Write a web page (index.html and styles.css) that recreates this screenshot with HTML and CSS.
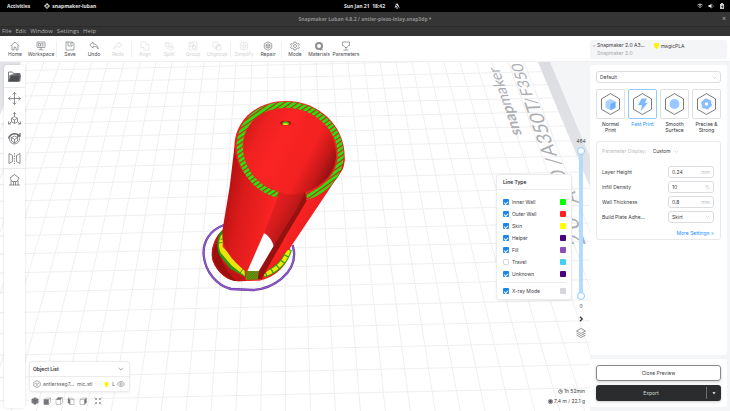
FILE: index.html
```html
<!DOCTYPE html>
<html lang="en">
<head>
<meta charset="utf-8">
<title>Snapmaker Luban</title>
<link rel="stylesheet" href="styles.css">
</head>
<body>
<svg class="defs" aria-hidden="true">
  <symbol id="chev" viewBox="0 0 10 10"><path d="M1 3l4 4 4-4" fill="none" stroke="currentColor"/></symbol>
  <symbol id="shield" viewBox="0 0 10 12"><path d="M0 0h10v6l-2 4-3 2-3-2-2-4z" fill="#fbf40a"/></symbol>
  <symbol id="hex" viewBox="0 0 30 30"><path d="M15 3.500l10 5.800v11.600l-10 5.800-10-5.800V9.300z" fill="#fff" stroke="#6b6d70"/></symbol>
</svg>

<header class="desktop-bar">
  <div class="desktop-side"><span>Activities</span>
    <span class="app"><svg viewBox="0 0 12 12"><path d="M6 0l6 6-6 6-6-6z" fill="#ddd"/><path d="M3.500 4l5 1.500-5 1.500 5 1.500" fill="none" stroke="#111" stroke-width="1.500"/></svg>snapmaker-luban</span></div>
  <div class="clock"><span>Sun Jan 21&nbsp; 18:42</span><svg viewBox="0 0 12 12"><path d="M6 1c3 0 3 3 3.300 5l1.700 3H1l1.700-3C3 4 3 1 6 1zM5 10h2v2H5z" fill="#ccc"/><path d="M1 1l10 10" stroke="#000" stroke-width="2"/><path d="M2 1l10 10" stroke="#ccc"/></svg></div>
  <div class="desktop-side status">
    <svg viewBox="0 0 12 12"><path d="M1 4.500c3-3 7-3 10 0M3 7c2-2 4-2 6 0M6 10V8" fill="none" stroke="#ddd" stroke-width="2"/></svg>
    <svg viewBox="0 0 12 12"><path d="M1 4h3l3-3v10L4 8H1z" fill="#eee"/><path d="M9 3c2 2 2 4 0 6" fill="none" stroke="#999" stroke-width="1.500"/></svg>
    <svg viewBox="0 0 12 12"><path d="M2 2h2V0h4v2h2v10H2z" fill="#ccc"/><path d="M7 4L4 8h2v3l3-4H7z" fill="#222"/></svg>
  </div>
</header>
<div class="title-bar"><span>Snapmaker Luban 4.8.2 / antler-piezo-inlay.snap3dp *</span><button class="close" aria-label="Close window">×</button></div>
<nav class="menu-bar"><button>File</button><button>Edit</button><button>Window</button><button>Settings</button><button>Help</button></nav>

<div class="toolbar">
  <button class="tool"><svg viewBox="0 0 20 20"><path d="M1.500 10L10 2l8.500 8M4 8.500V18h4v-5.500h4V18h4V8.500"/></svg>Home</button>
  <button class="tool wide"><svg viewBox="0 0 20 20"><rect x="2" y="2" width="16" height="11" rx="1"/><path d="M5 5h4v5H5zM11 5h4M11 7.500h4M11 10h4M10 13v4M5 17.500h10" /></svg>Workspace</button>
  <i class="sep"></i>
  <button class="tool"><svg viewBox="0 0 20 20"><path d="M2 2h13l3 3v13H2zM6 2v8h8V2M11 4v3"/></svg>Save</button>
  <button class="tool"><svg viewBox="0 0 20 20"><path d="M8 2L1.500 8 8 14v-3.500c5 0 8 1.500 10.500 5.500C18 10 14 6 8 5.500z"/></svg>Undo</button>
  <button class="tool" disabled><svg viewBox="0 0 20 20"><path d="M12 2l6.500 6L12 14v-3.500c-5 0-8 1.500-10.500 5.500C2 10 6 6 12 5.500z"/></svg>Redo</button>
  <i class="sep"></i>
  <button class="tool" disabled><svg viewBox="0 0 20 20"><path d="M2 2h10v5h6v11H8v-5H2z"/></svg>Align</button>
  <button class="tool" disabled><svg viewBox="0 0 20 20"><path d="M6 2l4 2v5l-4 2-4-2V4zM14 9l4 2v5l-4 2-4-2v-5zM2 4l4 2 4-2M10 11l4 2 4-2M13 4l3 3M4 13l3 3"/></svg>Split</button>
  <button class="tool" disabled><svg viewBox="0 0 20 20"><path d="M2 2h16v16H2zM5 5h6v6H5zM9 9h6v6H9z"/></svg>Group</button>
  <button class="tool" disabled><svg viewBox="0 0 20 20"><path d="M2 2h10v10H2zM9 9h9v9H9zM12 7h4v2M7 12v4h2"/></svg>Ungroup</button>
  <i class="sep"></i>
  <button class="tool" disabled><svg viewBox="0 0 20 20"><circle cx="10" cy="10" r="8"/><path d="M10 2v16M10 6L4 10l6 5M13 6v8M16 8v5"/></svg>Simplify</button>
  <button class="tool"><svg viewBox="0 0 20 20"><path d="M10 1.500l7.500 4.200v8.600L10 18.500l-7.500-4.200V5.700z"/><path d="M10 5.500l4 2.300v4.500L10 14.500l-4-2.200V7.800zM6 8l4 2 4-2M10 10v4"/></svg>Repair</button>
  <i class="sep"></i>
  <button class="tool"><svg viewBox="0 0 20 20"><path d="M8 2h4l.5 2.500 2.500 1.200 2.300-.9 1.500 3-1.800 1.700v1l1.800 1.700-1.500 3-2.300-.9-2.500 1.200L12 18H8l-.5-2.500L5 14.300l-2.300.9-1.500-3L3 10.500v-1L1.200 7.800l1.500-3L5 5.700l2.500-1.200z"/><circle cx="10" cy="10" r="3"/></svg>Mode</button>
  <button class="tool"><svg viewBox="0 0 20 20"><circle cx="10" cy="10" r="6" stroke="#8d8f93" stroke-width="4"/><path d="M12 17.500h6"/></svg>Materials</button>
  <button class="tool params"><svg viewBox="0 0 20 20"><path d="M3 2h14v7h-2l-3 4H8L5 9H3zM10 13v4M5 18h10"/></svg>Parameters</button>
  <div class="machine">
    <div class="machine-name"><b class="dot"></b><span>Snapmaker 2.0 A3...</span><small>Snapmaker 2.0</small></div>
    <div class="material"><svg viewBox="0 0 10 12"><use href="#shield"/></svg>magicPLA</div>
  </div>
</div>

<main class="work">
  <section class="stage" aria-label="3D preview">
    <svg class="scene" viewBox="0 62 590 349" preserveAspectRatio="xMinYMin slice">
      <defs>
        <linearGradient id="body" gradientUnits="userSpaceOnUse" x1="104" y1="300" x2="250" y2="330"><stop offset="0" stop-color="#b31112"/><stop offset=".4" stop-color="#dc1b1b"/><stop offset="1" stop-color="#f82322"/></linearGradient>
        <linearGradient id="inner" gradientUnits="userSpaceOnUse" x1="160" y1="130" x2="425" y2="270"><stop offset="0" stop-color="#d01b1b"/><stop offset=".15" stop-color="#ef2121"/><stop offset=".35" stop-color="#fa2424"/><stop offset=".68" stop-color="#f32121"/><stop offset=".85" stop-color="#c41818"/><stop offset="1" stop-color="#7d0e0e"/></linearGradient>
        <linearGradient id="chute" gradientUnits="userSpaceOnUse" x1="240" y1="330" x2="320" y2="375"><stop offset="0" stop-color="#ea2020"/><stop offset=".5" stop-color="#d61c1c"/><stop offset="1" stop-color="#b01616"/></linearGradient>
        <linearGradient id="flank" gradientUnits="userSpaceOnUse" x1="300" y1="400" x2="370" y2="440"><stop offset="0" stop-color="#fc2323"/><stop offset=".6" stop-color="#ee1f1f"/><stop offset="1" stop-color="#d51919"/></linearGradient>
        <pattern id="hatch" width="12" height="12" patternUnits="userSpaceOnUse" patternTransform="rotate(55)"><path d="M0 0h12v12H0z" fill="#19ea12"/><path d="M0 0h4v12H0z" fill="#b92c10"/><path d="M4 0h1v12H4z" fill="#d9a80c"/></pattern>
        <pattern id="fine" width="5" height="5" patternUnits="userSpaceOnUse" patternTransform="rotate(45)"><path d="M0 0h5v5H0z" fill="#2db50c"/><path d="M0 0h2v5H0z" fill="#b4480c"/></pattern>
        <linearGradient id="band" x1="0" y1="0" x2="0" y2="1"><stop offset="0" stop-color="#dcdde0"/><stop offset="1" stop-color="#e4e5e8"/></linearGradient>
      </defs>
      <path d="M0 62h590v349H0z" fill="#fff"/>
      <g id="plate-grid" stroke="#efeff1"></g>
      <path d="M0 62h21L0 115z" fill="#e3e4e7"/>
      <path d="M538 62h52v125z" fill="#f4f5f7"/>
      <path d="M538 62h12l40 95v30z" fill="url(#band)"/>
      <g class="plate-text">
        <text class="brand" transform="translate(522 135) rotate(-109) skewX(-17)"><tspan class="strong">snap</tspan>maker</text>
        <text transform="translate(533 96) rotate(-109) skewX(-17)">F350</text>
        <text transform="translate(538 104) rotate(-109) skewX(-17)">/</text>
        <text class="mid" transform="translate(557 156) rotate(-109) skewX(-17)">A350T</text>
        <text class="mid" transform="translate(567 180) rotate(-109) skewX(-17)">0 /</text>
        <text class="mid" transform="translate(579 203) rotate(-109) skewX(-17)">A</text>
        <text class="near" transform="translate(586 245) rotate(-109) skewX(-17)">2.0</text>
      </g>
      <g transform="translate(190 90) scale(.33333)">
        <path d="M102 405C60 420 38 455 41 495c4 50 40 92 82 102l65 3c60-3 130-50 124-115l-4-20" fill="none" stroke="#5f3a94" stroke-width="7"/>
        <path d="M102 405C60 420 38 455 41 495c4 50 40 92 82 102l65 3c60-3 130-50 124-115l-4-20" fill="none" stroke="#9259cf" stroke-width="4"/>
        <path d="M98 420C70 445 60 485 68 512c14 38 46 62 80 62l60-2c48-10 94-50 92-100l-60-70z" fill="#f02020"/>
        <path d="M98 420C70 445 60 485 68 512c14 38 46 62 80 62l20-2-6-12C120 540 80 510 84 460z" fill="#c01515"/>
        <path d="M84 455C62 480 62 510 84 536c14 18 34 32 56 38-34-34-52-64-56-119z" fill="#9d0f0f"/>
        <path d="M98 418C80 438 78 470 88 495l34 42 44 24v-18L98 480z" fill="#1f9c0c"/>
        <path d="M98 430C84 450 84 470 92 488l32 38 40 32v-16L98 470z" fill="#eee408"/>
        <path d="M84 460l12-3M92 448l8-2M150 550l8-12" stroke="#26920b" stroke-width="3"/>
        <path d="M297 478c-8 32-34 62-76 76" fill="none" stroke="#24a80c" stroke-width="18"/>
        <path d="M296 480c-8 31-34 60-74 74" fill="none" stroke="#f1e90a" stroke-width="12" stroke-dasharray="17 4"/>
        <path d="M464 200c0 20-2 34-10 44L300 474l-80 82-6 4 48-78 88-155z" fill="url(#flank)"/>
        <path d="M464 200c0-93-77-167-176-167C205 33 137 85 133 165c1 75 61 131 131 153l85 10c64-24 115-70 115-128z" fill="#ef2020"/>
        <path d="M263 303c-60-16-101-74-101-138 0-66 56-112 124-112 84 0 152 62 152 142 0 50-34 90-92 112l-2 26-92 137-30-40z" fill="url(#inner)"/>
        <path d="M263 303q30 20 83 3l-2 28-92 134-30-38z" fill="url(#chute)"/>
        <path d="M134 165L119 290 100 405c-10 50 6 90 65 138l8-2 49-111 43-112C194 296 136 240 134 165z" fill="url(#body)"/>
        <path d="M222 430c12 5 24 20 29 38l-37 76h-42z" fill="#fff"/>
        <path d="M345 308l5 24L262 482l-48 86-12-2 5-24 44-74 70-112z" fill="#97110f"/>
        <path d="M170 543h36l-3 26h-36z" fill="url(#fine)"/>
        <path d="M263 314C195 296 149 236 149 165 152 90 215 44 287 44c90 0 165 70 165 153 0 56-46 106-101 123" fill="none" stroke="url(#hatch)" stroke-width="18"/>
        <ellipse cx="287" cy="99" rx="17" ry="7" fill="#a81616"/>
        <path d="M276 102c4-11 18-11 22 0l-3 3h-16z" fill="#3dbb10"/><path d="M280 100h13v5h-13z" fill="#f3dc0a"/>
      </g>
    </svg>

    <div class="rail">
      <button aria-label="Open"><svg viewBox="0 0 26 24"><path d="M1 3h8l2 3h13v15H1z" fill="#fff" stroke="#55575b" stroke-width="1.500"/><path d="M5 10h20l-3 12H1z" fill="#4c4e52"/><path d="M2 12l4-3 17-3v4H4z" fill="#4c4e52"/></svg></button>
      <hr>
      <button aria-label="Move"><svg viewBox="0 0 26 26"><path d="M13 1v24M1 13h24M9.500 5L13 1l3.500 4M9.500 21l3.500 4 3.500-4M5 9.500L1 13l4 3.500M21 9.500l4 3.500-4 3.500"/></svg></button>
      <button aria-label="Scale"><svg viewBox="0 0 26 26"><path d="M13 9l6 3.500v7L13 23l-6-3.500v-7zM7 12.500l6 3.500 6-3.500M13 16v7M13 9V1M10 4.500L13 1l3 3.500M7 20l-6 4M1 19v5h5M19 20l6 4M25 19v5h-5"/></svg></button>
      <button aria-label="Rotate"><svg viewBox="0 0 26 26"><circle cx="13" cy="14" r="10"/><path d="M13 8l6 3v7l-6 4-6-4v-7zM7 11l6 4 6-4M13 15v7"/><path d="M1 13C3 3 15 0 23 7M24 2v6h-6" stroke-width="2.500"/></svg></button>
      <button aria-label="Mirror"><svg viewBox="0 0 26 26"><path d="M2 3l7 4v12l-7 4zM24 3l-7 4v12l7 4z"/><path d="M13 2v22" stroke-dasharray="3 2"/></svg></button>
      <hr>
      <button aria-label="Supports"><svg viewBox="0 0 26 26"><path d="M13 3l9 7-4 7H8l-4-7zM2 24h22M6 15v9M20 15v9M11 18v6M15 18v6"/></svg></button>
    </div>

    <div class="left-dock">
      <section class="objects">
        <h2>Object List<svg viewBox="0 0 10 10"><use href="#chev"/></svg></h2>
        <div class="object"><svg class="cube" viewBox="0 0 20 20"><path d="M10 1.500l8 4.500v8.500l-8 4.500-8-4.500V6zM5 7.500l5 3 5-3M10 10.500V16"/></svg><span>antlersseg7...&nbsp; mic.stl</span><svg class="tag" viewBox="0 0 10 12"><use href="#shield"/></svg><b>L</b><svg class="eye" viewBox="0 0 20 14"><path d="M1 7c4-8 14-8 18 0-4 8-14 8-18 0z"/><circle cx="10" cy="7" r="3"/></svg></div>
      </section>
      <div class="views">
        <button aria-label="Isometric view"><svg viewBox="0 0 16 16"><path d="M8 1l6.500 3.500v7L8 15l-6.500-3.500v-7z" fill="#7a7c80"/><path d="M2 4.500L8 8l6-3.500M8 8v7" stroke="#55575b"/></svg></button>
        <button aria-label="Front view"><svg viewBox="0 0 16 16"><path d="M2 5h9v10H2zM2 5l4-3h9l-4 3M15 2v9l-4 4" /><path d="M2 5h9v10H2z" fill="#74767a"/></svg></button>
        <button aria-label="Top view"><svg viewBox="0 0 16 16"><path d="M2 5h9v10H2zM15 2v9l-4 4" /><path d="M2 5l4-4h9l-4 4z" fill="#74767a"/></svg></button>
        <button aria-label="Left view"><svg viewBox="0 0 16 16"><path d="M6 5h8v10H6zM2 2h8l4 3"/><path d="M2 2l4 3v10l-4-4z" fill="#74767a"/></svg></button>
        <button aria-label="Right view"><svg viewBox="0 0 16 16"><path d="M2 5h9v10H2zM2 5l4-3h9"/><path d="M11 5l4-3v9l-4 4z" fill="#74767a"/></svg></button>
        <button class="fit" aria-label="Fit view"><svg viewBox="0 0 16 16"><path d="M1 1l4 4M5 2v3H2M15 1l-4 4M11 2v3h3M1 15l4-4M5 14v-3H2M15 15l-4-4M11 14v-3h3" stroke-width="1.500"/></svg></button>
      </div>
    </div>

    <div class="right-dock">
      <div class="layers">
        <section class="line-type">
          <h2>Line Type</h2>
          <div class="types">
            <label><input type="checkbox" checked><span>Inner Wall</span><i class="c-inner"></i></label>
            <label><input type="checkbox" checked><span>Outer Wall</span><i class="c-outer"></i></label>
            <label><input type="checkbox" checked><span>Skin</span><i class="c-skin"></i></label>
            <label><input type="checkbox" checked><span>Helper</span><i class="c-helper"></i></label>
            <label><input type="checkbox" checked><span>Fill</span><i class="c-fill"></i></label>
            <label><input type="checkbox"><span>Travel</span><i class="c-travel"></i></label>
            <label><input type="checkbox" checked><span>Unknown</span><i class="c-helper"></i></label>
            <hr>
            <label><input type="checkbox" checked><span>X-ray Mode</span><i class="c-xray"></i></label>
          </div>
        </section>
        <div class="layer-range">
          <output>464</output>
          <div class="slider">
            <input type="range" min="0" max="464" value="464" aria-label="Top layer">
            <input type="range" min="0" max="464" value="0" aria-label="Bottom layer">
          </div>
          <output>0</output>
          <button aria-label="Collapse line types"><svg viewBox="0 0 12 12"><path d="M4 1.500L8.500 6 4 10.500" stroke="#333" stroke-width="2.500"/></svg></button>
          <button class="stack" aria-label="Layers"><svg viewBox="0 0 20 20"><path d="M10 1l9 5-9 5-9-5zM1 10l9 5 9-5M1 14l9 5 9-5"/></svg></button>
        </div>
      </div>
      <div class="stats">
        <span><svg viewBox="0 0 12 12"><circle cx="6" cy="6" r="4.500"/><path d="M6 3v3h3"/></svg>1h 52min</span>
        <span><svg viewBox="0 0 12 12"><circle cx="6" cy="6" r="5"/><circle cx="6" cy="6" r="2" stroke-width="3"/></svg>7.4 m / 22.1 g</span>
      </div>
    </div>
  </section>

  <aside class="sidebar">
    <section class="card settings">
      <div class="pick"><select aria-label="Material preset"><option>Default</option></select><svg viewBox="0 0 10 10"><use href="#chev"/></svg></div>
      <div class="presets">
        <button><span class="tile"><svg viewBox="0 0 30 30"><use href="#hex"/><path d="M15 9.500l5.500 2.700v7L15 22l-5.500-2.800v-7z" fill="#a9d3ff"/><path d="M15 15l5.500-2.800v7L15 22z" fill="#6fadf8"/></svg></span>Normal<br>Print</button>
        <button class="active"><span class="tile"><svg viewBox="0 0 30 30"><use href="#hex"/><path d="M14 9h6l-2.500 4.500H21L13 23l1.500-6.500H10z" fill="#7fb8fb"/></svg></span>Fast Print</button>
        <button><span class="tile"><svg viewBox="0 0 30 30"><use href="#hex"/><circle cx="15" cy="15" r="5.500" fill="#98c8ff"/></svg></span>Smooth<br>Surface</button>
        <button><span class="tile"><svg viewBox="0 0 30 30"><use href="#hex"/><circle cx="15" cy="15" r="3.700" fill="none" stroke="#88befd" stroke-width="3.600"/><circle cx="15" cy="15" r="5.300" fill="none" stroke="#88befd" stroke-width="1.500" stroke-dasharray="2.800 2.750"/></svg></span>Precise &amp;<br>Strong</button>
      </div>
      <div class="params-box">
        <div class="display"><label for="disp">Parameter Display:</label><select id="disp"><option>Custom</option></select><svg viewBox="0 0 10 10"><use href="#chev"/></svg></div>
        <div class="field"><label for="lh">Layer Height</label><span class="box"><input id="lh" value="0.24"><em>mm</em></span></div>
        <div class="field"><label for="id">Infill Density</label><span class="box"><input id="id" value="10"><em>%</em></span></div>
        <div class="field"><label for="wt">Wall Thickness</label><span class="box"><input id="wt" value="0.8"><em>mm</em></span></div>
        <div class="field"><label for="bp">Build Plate Adhe...</label><span class="box"><select id="bp"><option>Skirt</option></select><svg viewBox="0 0 10 10"><use href="#chev"/></svg></span></div>
        <a href="#more">More Settings &gt;</a>
      </div>
    </section>
    <section class="card actions">
      <button class="preview">Close Preview</button>
      <div class="export"><button>Export</button><button class="more" aria-label="Export options"><svg viewBox="0 0 10 10"><path d="M1 3h8L5 8z" fill="#fff"/></svg></button></div>
    </section>
  </aside>
</main>
<script src="grid.js"></script>
</body>
</html>
```
FILE: styles.css
```css
* { box-sizing: border-box; }
body {
  margin: 0;
  height: 100vh;
  display: flex;
  flex-direction: column;
  overflow: hidden;
  background: #f4f5f7;
  color: #3e4043;
  font: 5px/6px Inter, Roboto, sans-serif;
}
button, input, select { font: inherit; color: inherit; }
button { margin: 0; padding: 0; border: 0; background: none; }
select, input { margin: 0; padding: 0; border: 0; background: none; outline: 0; appearance: none; }
h2 { margin: 0; font-size: 5px; line-height: 6px; font-weight: 600; color: #303236; }
hr { margin: 0; border: 0; }
svg { display: block; flex: none; }
.defs { display: none; }

/* desktop chrome */
.desktop-bar {
  flex: none; display: flex; align-items: center;
  height: 12px; padding: 0 5px 0 7px;
  background: #000; color: #e4e4e4;
  font: bold 5px/12px "Open Sans", "Noto Sans", sans-serif;
}
.desktop-side { flex: 1; display: flex; align-items: center; gap: 14px; }
.desktop-side svg, .clock svg { width: 6px; height: 6px; }
.app, .clock { display: flex; align-items: center; gap: 2px; }
.clock { gap: 9px; margin-left: 12px; }
.status { justify-content: flex-end; gap: 5px; }
.title-bar {
  flex: none; display: flex; align-items: center; justify-content: center; position: relative;
  height: 15px; background: #353535; color: #8f8f8f; border-bottom: 1px solid #2b2b2b;
  font: bold 5px/14px "Open Sans", "Noto Sans", sans-serif;
}
.close { position: absolute; right: 4px; top: 4px; font-size: 7px; line-height: 6px; }
.menu-bar {
  flex: none; display: flex; align-items: flex-start; gap: 4px; height: 9px; padding-left: 2px;
  background: #333; color: #b0b0b0; font: 6px/8px "Open Sans", "Noto Sans", sans-serif;
}

/* toolbar */
.toolbar { flex: none; display: flex; height: 26px; padding: 0 3px; background: #fff; border-bottom: 1px solid #eeeff1; }
.tool { width: 24px; padding-top: 5px; display: flex; flex-direction: column; align-items: center; white-space: nowrap; color: #4a4c50; }
.tool.wide { width: 28px; }
.tool.params { width: 30px; }
.tool:disabled { color: #d3d4d7; }
.tool svg { width: 10px; height: 10px; fill: none; stroke: currentColor; stroke-width: 1px; }
.sep { width: 1px; height: 16px; margin: 5px 1px; background: #f0f1f2; }
.machine { width: 137px; height: 19px; margin: 4px 0 0 auto; padding: 2px 3px; display: flex; gap: 9px; background: #f4f5f7; border-radius: 3px; }
.machine-name { position: relative; display: grid; padding-left: 4px; line-height: 7px; white-space: nowrap; }
.machine-name small { font-size: 5px; line-height: 8px; color: #a8aaad; }
.dot { position: absolute; left: 0; top: 3px; width: 2px; height: 2px; border-radius: 50%; background: #c9cacd; }
.material { display: flex; gap: 2px; height: 7px; align-items: center; }
.material svg { width: 5px; height: 6px; }

/* stage */
.work { flex: 1; min-height: 0; display: flex; }
.stage { position: relative; flex: 1; min-width: 0; display: flex; overflow: hidden; }
.scene { position: absolute; inset: 0; width: 100%; height: 100%; }
.plate-text { fill: #acaeb2; font: 400 15px Lato, sans-serif; }
.plate-text .brand { font-size: 15px; }
.plate-text .strong { font-weight: 700; }
.plate-text .mid { font-size: 19px; }
.plate-text .near { font-size: 21px; }
.rail, .left-dock, .right-dock { position: relative; }
.rail { width: 21px; margin: 3px 0 3px 4px; display: flex; flex-direction: column; align-items: center; background: #fff; border-radius: 3px; box-shadow: 0 0 3px #0002; }
.rail button { height: 20px; display: grid; place-items: center; }
.rail button:first-child { height: 22px; }
.rail svg { width: 13px; height: 13px; fill: none; stroke: #696b6f; stroke-width: 1.5px; }
.rail hr { width: 100%; height: 1px; background: #e8e9eb; }
.left-dock { margin: auto 0 6px 4px; width: 101px; }
.objects { background: #fff; border: 1px solid #ebecee; border-radius: 3px; box-shadow: 0 1px 3px #0001; }
.objects h2 { height: 15px; padding: 0 5px 0 3px; display: flex; align-items: center; justify-content: space-between; border-bottom: 1px solid #ebecee; }
.objects h2 svg { width: 6px; height: 6px; color: #77797d; }
.object { display: flex; align-items: center; height: 14px; padding: 0 4px 0 3px; white-space: nowrap; color: #5c5e62; }
.object svg { fill: none; stroke: #77797d; stroke-width: 1.5px; }
.object .cube { width: 8px; height: 8px; margin-right: 2px; }
.object .tag { width: 5px; height: 5px; margin: 0 3px 0 auto; stroke: none; }
.object b { font-weight: 500; }
.object .eye { width: 8px; height: 6px; margin-left: 2px; }
.views { display: flex; gap: 4px; padding: 5px 0 0 2px; }
.views svg { width: 8px; height: 8px; fill: none; stroke: #8d8f93; stroke-width: 1px; }
.views .fit { margin-left: 3px; }

.right-dock { margin-left: auto; padding: 0 1px 5px 0; display: flex; flex-direction: column; justify-content: flex-end; }
.layers { display: flex; gap: 1px; margin-bottom: 48px; }
.line-type { width: 76px; height: 126px; margin-top: 36px; background: #fff; border: 1px solid #ebecee; border-radius: 3px; box-shadow: 0 1px 3px #0001; }
.line-type h2 { padding: 4px 6px; line-height: 6px; border-bottom: 1px solid #ebecee; }
.types { padding: 6px 5px 0 6px; }
.types label { display: flex; align-items: center; height: 12px; }
.types input { width: 6px; height: 6px; margin-right: 3px; border: 1px solid #d9dadd; border-radius: 1px; }
.types input:checked { border: 0; background: #1b87ea; display: grid; place-items: center; }
.types input:checked::after { content: ""; width: 3px; height: 2px; border: solid #fff; border-width: 0 0 1px 1px; rotate: -45deg; }
.types i { width: 6px; height: 6px; margin-left: auto; border-radius: 1px; }
.types hr { height: 1px; margin: 2px 0; background: #ebecee; }
.c-inner { background: #0f0; }
.c-outer { background: #ff2020; }
.c-skin { background: #ff0; }
.c-helper { background: #4b0082; }
.c-fill { background: #8d4bbb; }
.c-travel { background: #44cef6; }
.c-xray { background: #d5d6d9; }
.layer-range { width: 16px; display: flex; flex-direction: column; align-items: center; }
.layer-range output { height: 6px; color: #46484b; }
.layer-range svg { width: 6px; height: 6px; fill: none; stroke: #77797d; stroke-width: 1.5px; }
.layer-range button { margin-top: 7px; }
.layer-range .stack { margin-top: 6px; }
.layer-range .stack svg { width: 10px; height: 10px; }
.slider { display: grid; width: 8px; height: 153px; margin: 3px 0; background: linear-gradient(#b1dcff, #b1dcff) center / 4px 146px no-repeat; }
.slider input { grid-area: 1 / 1; width: 8px; height: 153px; writing-mode: vertical-lr; direction: rtl; pointer-events: none; }
.slider input::-webkit-slider-thumb { appearance: none; pointer-events: auto; width: 8px; height: 8px; background: #fff; border: 1px solid #8accff; border-radius: 50%; }
.stats { display: flex; flex-direction: column; align-items: flex-end; padding-right: 4px; line-height: 10px; }
.stats span { display: flex; align-items: center; gap: 1px; }
.stats svg { width: 5px; height: 5px; fill: none; stroke: #46484b; stroke-width: 1.5px; }

/* sidebar */
.sidebar { width: 140px; padding: 3px 3px 4px 0; display: flex; flex-direction: column; gap: 4px; }
.card { background: #fff; border-radius: 3px; padding: 6px; }
.settings { flex: 1; }
.pick, .box { display: flex; align-items: center; border: 1px solid #dcdde0; border-radius: 3px; }
.pick { height: 12px; padding: 0 3px; }
.pick select { flex: 1; }
.pick svg, .display svg, .box svg { width: 5px; height: 5px; color: #b6b8bb; }
.presets { display: grid; grid-template-columns: repeat(4, minmax(0, 1fr)); gap: 3px; margin-top: 6px; text-align: center; }
.presets button { display: block; align-self: start; color: #303236; white-space: nowrap; }
.tile { display: grid; place-items: center; height: 30px; margin-bottom: 2px; border: 1px solid #dfe0e3; border-radius: 2px; overflow: hidden; }
.tile svg { width: 27px; height: 28px; }
.presets .active { color: #1890ff; }
.active .tile { border-color: #91caff; }
.params-box { margin-top: 8px; padding: 6px 6px 3px 5px; border: 1px solid #e8e9eb; border-radius: 3px; display: grid; }
.display { display: flex; align-items: center; height: 6px; margin-bottom: 10px; color: #3e4043; }
.display label { margin-right: 6px; color: #b9bbbe; }
.display svg { margin-left: 2px; }
.field { display: flex; align-items: center; justify-content: space-between; height: 15px; }
.box { width: 46px; height: 12px; padding: 0 3px; }
.box input, .box select { flex: 1; width: 0; min-width: 0; }
.box em { font-style: normal; color: #bcbec1; }
.params-box a { justify-self: end; margin-top: 6px; color: #1890ff; text-decoration: none; }
.actions { display: grid; gap: 4px; }
.preview, .export { height: 16px; border-radius: 3px; box-shadow: 0 1px 3px #0003; }
.preview { border: 1px solid #88898c; }
.export { display: flex; background: #2a2c2e; color: #d9dadb; }
.export button:first-child { flex: 1; }
.export .more { width: 15px; height: 12px; margin-top: 2px; border-left: 1px solid #6c6e70; display: grid; place-items: center; }
.more svg { width: 4px; height: 4px; }
```
FILE: grid.js
```js
// Draws the build plate grid in perspective, converging far above the view.
const plate = document.getElementById('plate-grid');
const vanish = { x: 281, y: -564 };

function addLine(x1, y1, x2, y2) {
  const line = document.createElementNS('http://www.w3.org/2000/svg', 'line');
  Object.entries({ x1, y1, x2, y2 }).forEach(([name, value]) => line.setAttribute(name, value));
  plate.appendChild(line);
}

for (let x = -68; x < 545; x += 16) {
  addLine(x, 62, vanish.x + (x - vanish.x) * (975 / 626), 411);
}
for (let y = 69; y < 440; y += 12.7 * (1 + (y - 72) * 0.0027)) {
  addLine(0, y + 2, 590, y - 11);
}
```
